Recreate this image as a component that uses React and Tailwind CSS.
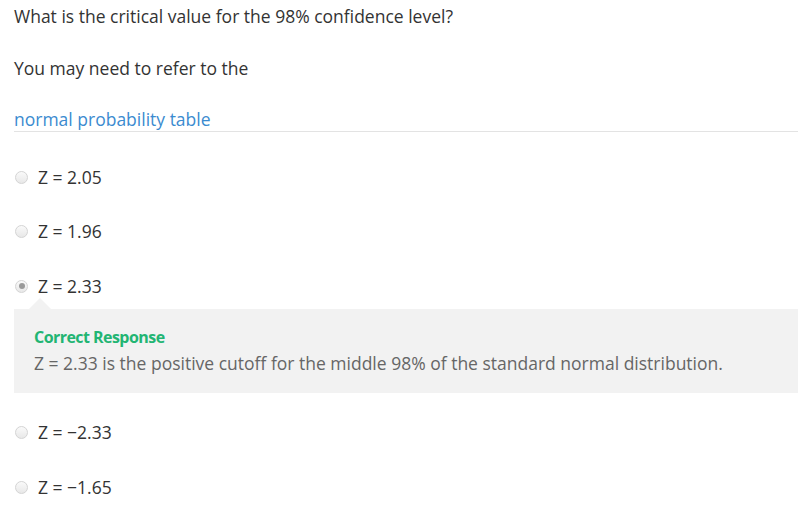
const options = [
  { id: 'a', label: 'Z = 2.05' },
  { id: 'b', label: 'Z = 1.96' },
  { id: 'c', label: 'Z = 2.33', selected: true },
  { id: 'd', label: 'Z = −2.33' },
  { id: 'e', label: 'Z = −1.65' },
]

const gaps = ['', 'mt-[30px]', 'mt-[31px]', 'mt-[27px]', 'mt-[31px]']

function Radio({ checked }) {
  return (
    <span className="w-[13px] h-[13px] rounded-full border border-[#d4d4d4] bg-gradient-to-b from-[#fafafa] to-[#e8e8e8] flex items-center justify-center shrink-0">
      {checked && <span className="w-[6px] h-[6px] rounded-full bg-[#9a9a9a]" />}
    </span>
  )
}

export default function App() {
  return (
    <div className="w-[810px] h-[512px] bg-white px-[14px] pt-[4px] text-[17.5px] leading-[24px] text-[#333] overflow-hidden"
      style={{ fontFamily: '"Open Sans", sans-serif' }}>
      <p>What is the critical value for the 98% confidence level?</p>
      <p className="mt-[28px]">You may need to refer to the</p>
      <div className="mt-[27px] w-[784px] border-b border-[#e3e3e3]">
        <a className="text-[#3b8bd0]">normal probability table</a>
      </div>

      <div className="mt-[33px]">
        {options.map((o, i) => (
          <div key={o.id}>
            <label className={`flex items-center gap-[10px] h-[24px] ${gaps[i]}`}>
              <span className="pl-[1px]"><Radio checked={o.selected} /></span>
              <span>{o.label}</span>
            </label>
            {o.selected && (
              <div className="relative mt-[11px] w-[784px] bg-[#f2f2f2] px-[20px] pt-[18px] pb-[18px]">
                <span className="absolute left-[15px] -top-[11px] w-0 h-0 border-l-[11px] border-r-[11px] border-b-[11px] border-l-transparent border-r-transparent border-b-[#f2f2f2]" />
                <div className="text-[16px] leading-[20px] font-bold text-[#22b573] tracking-[-0.55px]">Correct Response</div>
                <div className="mt-[4px] text-[#666]">Z = 2.33 is the positive cutoff for the middle 98% of the standard normal distribution.</div>
              </div>
            )}
          </div>
        ))}
      </div>
    </div>
  )
}
